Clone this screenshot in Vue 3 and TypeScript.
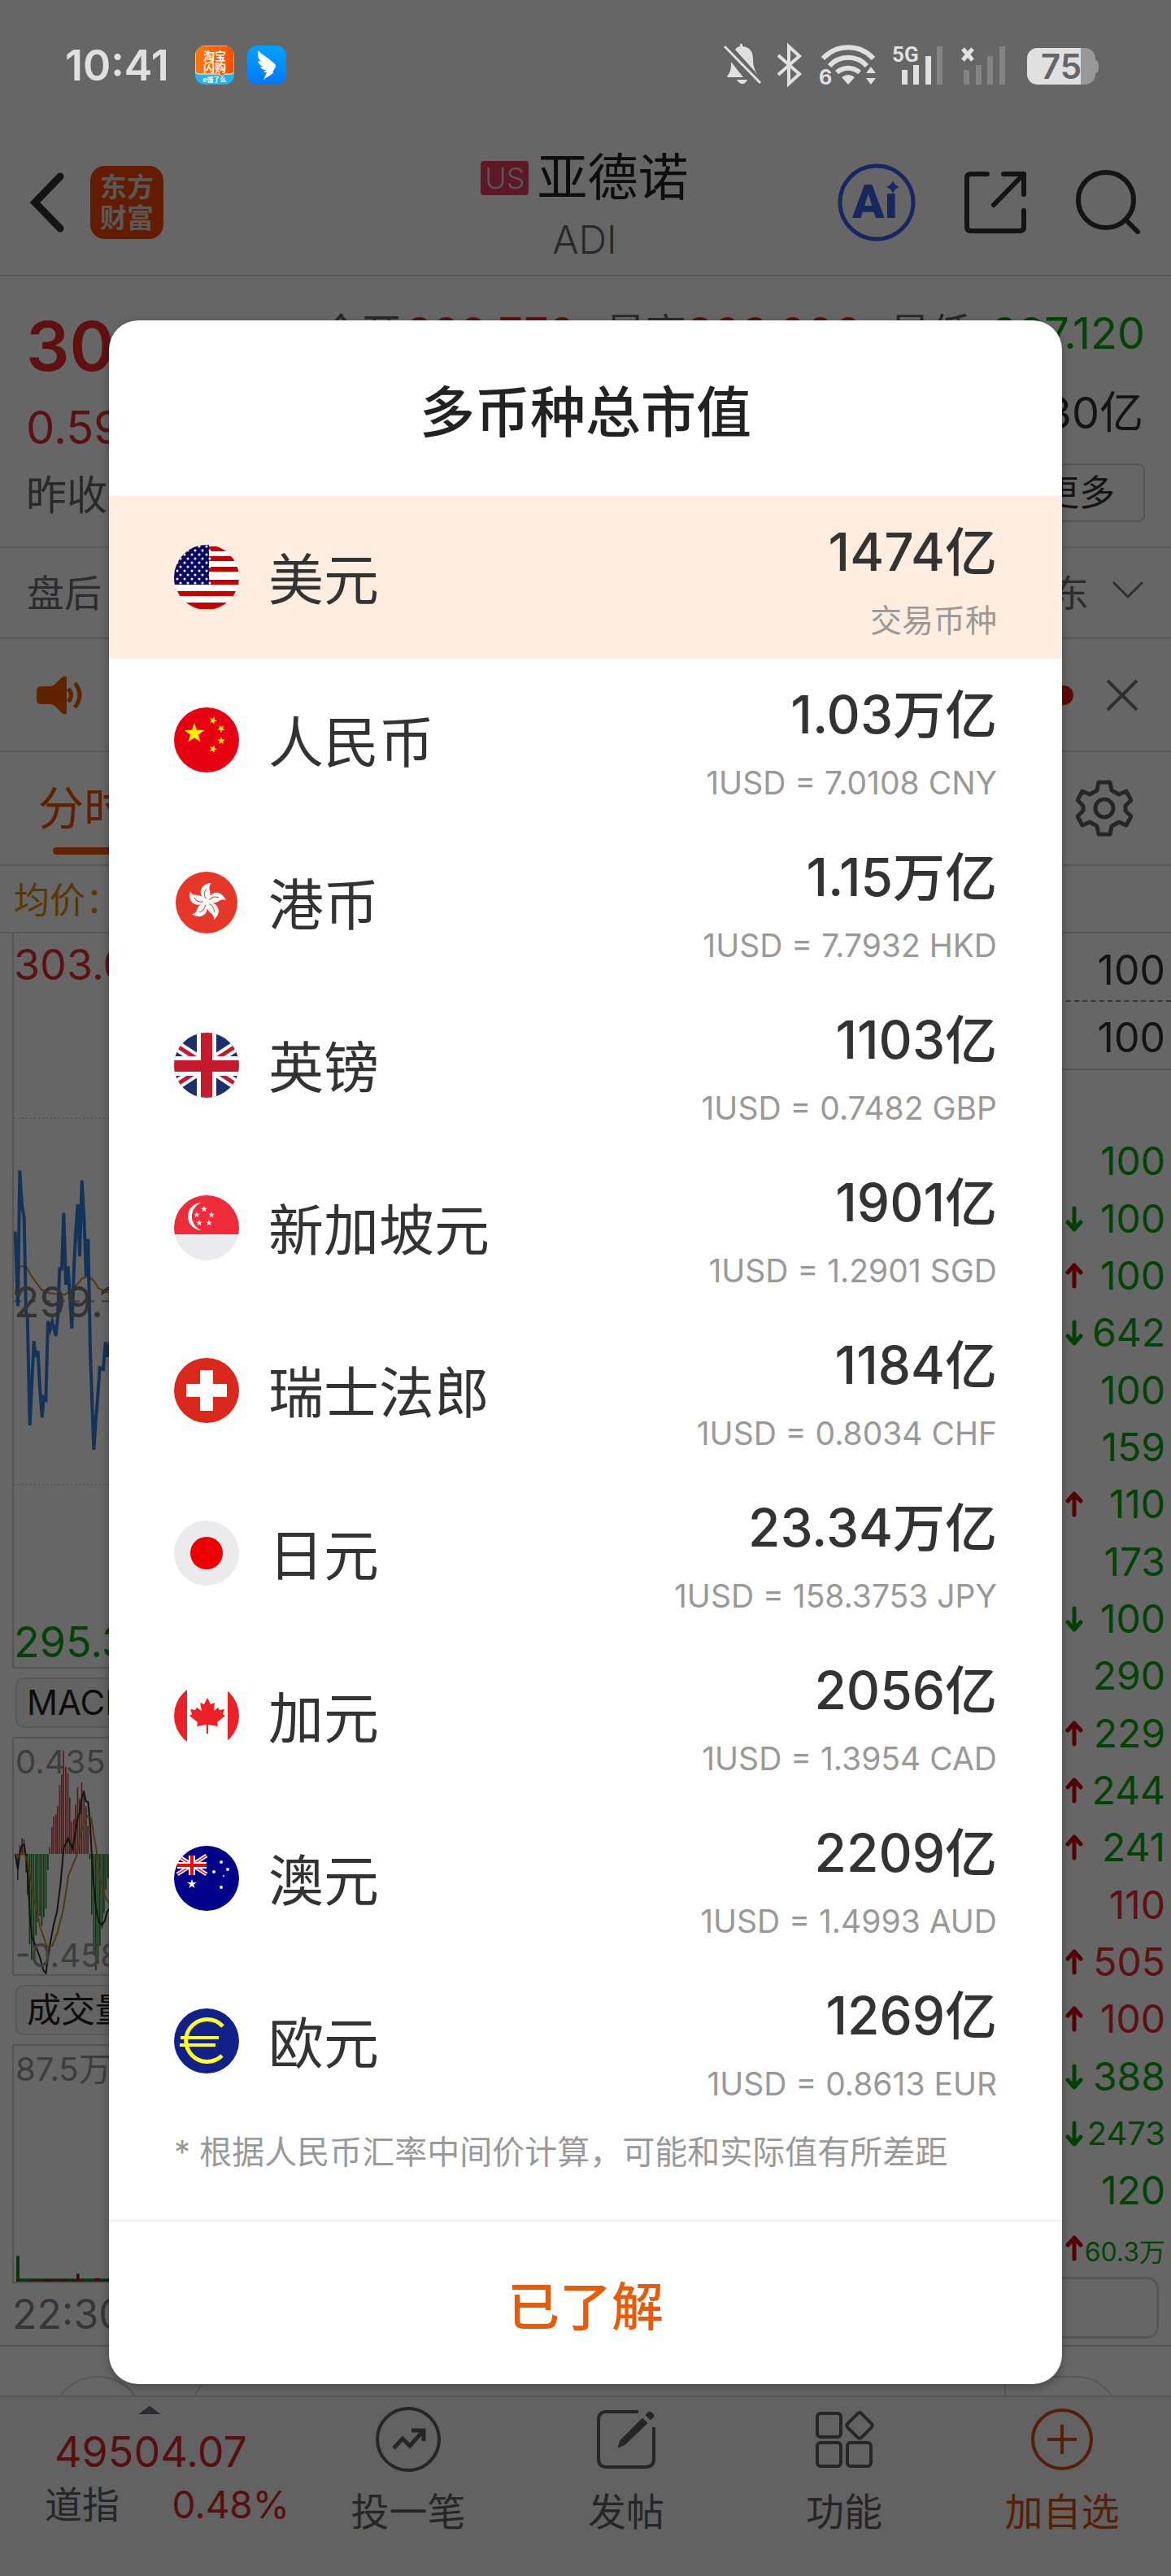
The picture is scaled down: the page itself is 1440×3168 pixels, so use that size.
<script setup lang="ts">
interface Currency { flag: string; name: string; amount: string; rate: string; active?: boolean }
interface Tick { size: string; tone: 'up' | 'down'; arrow?: 'up' | 'down'; scale?: 'mid' | 'small' }

const currencies: Currency[] = [
  { flag: 'us', name: '美元', amount: '1474亿', rate: '交易币种', active: true },
  { flag: 'cn', name: '人民币', amount: '1.03万亿', rate: '1USD = 7.0108 CNY' },
  { flag: 'hk', name: '港币', amount: '1.15万亿', rate: '1USD = 7.7932 HKD' },
  { flag: 'gb', name: '英镑', amount: '1103亿', rate: '1USD = 0.7482 GBP' },
  { flag: 'sg', name: '新加坡元', amount: '1901亿', rate: '1USD = 1.2901 SGD' },
  { flag: 'ch', name: '瑞士法郎', amount: '1184亿', rate: '1USD = 0.8034 CHF' },
  { flag: 'jp', name: '日元', amount: '23.34万亿', rate: '1USD = 158.3753 JPY' },
  { flag: 'ca', name: '加元', amount: '2056亿', rate: '1USD = 1.3954 CAD' },
  { flag: 'au', name: '澳元', amount: '2209亿', rate: '1USD = 1.4993 AUD' },
  { flag: 'eu', name: '欧元', amount: '1269亿', rate: '1USD = 0.8613 EUR' },
]

const ticks: Tick[] = [
  { size: '100', tone: 'down' },
  { size: '100', tone: 'down', arrow: 'down' },
  { size: '100', tone: 'down', arrow: 'up' },
  { size: '642', tone: 'down', arrow: 'down' },
  { size: '100', tone: 'down' },
  { size: '159', tone: 'down' },
  { size: '110', tone: 'down', arrow: 'up' },
  { size: '173', tone: 'down' },
  { size: '100', tone: 'down', arrow: 'down' },
  { size: '290', tone: 'down' },
  { size: '229', tone: 'down', arrow: 'up' },
  { size: '244', tone: 'down', arrow: 'up' },
  { size: '241', tone: 'down', arrow: 'up' },
  { size: '110', tone: 'up' },
  { size: '505', tone: 'up', arrow: 'up' },
  { size: '100', tone: 'up', arrow: 'up' },
  { size: '388', tone: 'down', arrow: 'down' },
  { size: '2473', tone: 'down', arrow: 'down', scale: 'mid' },
  { size: '120', tone: 'down' },
  { size: '60.3万', tone: 'down', arrow: 'up', scale: 'small' },
]

const priceLine = '53,628 63,778 70,505 78,575 86,600 93,795 98,795 107,1018 122,848 128,880 137,868 143,935 152,1002 158,962 166,966 174,808 182,825 190,810 203,838 210,800 217,703 225,703 232,590 240,735 248,698 262,823 270,700 276,632 284,573 291,678 299,525 307,600 315,718 322,643 330,870 343,1067 350,1010 357,965 365,902 378,905 386,850 393,880 402,850'
const averageLine = '53,755 70,698 92,697 110,715 130,730 150,745 180,752 235,755 270,742 300,722 325,718 345,728 360,742 402,752'
const difLine = '53,457 63,488 70,455 78,440 86,438 92,460 100,500 108,590 115,625 130,645 145,668 157,693 166,699 180,645 195,600 207,575 220,520 232,445 248,425 264,447 275,415 285,378 292,375 298,345 306,330 314,350 322,352 330,400 340,505 352,570 362,595 374,601 384,592 392,575 402,567'
const deaLine = '53,457 65,463 85,455 100,475 120,540 145,605 170,645 190,643 210,615 230,570 250,500 280,460 300,405 320,380 333,384 350,440 370,520 390,550 402,557'
const axis = 457
const macdBars: [number, number][] = [
  [63, 510], [71, 440], [79, 425], [86, 428], [94, 495], [99, 540], [107, 640], [114, 672], [122, 648], [130, 622],
  [137, 595], [145, 583], [152, 603], [159, 585], [167, 568], [174, 490], [181, 443], [189, 403], [196, 381],
  [204, 377], [210, 360], [218, 317], [225, 296], [232, 248], [240, 280], [248, 294], [255, 343], [262, 392],
  [270, 386], [276, 357], [284, 322], [291, 346], [299, 312], [307, 328], [315, 360], [322, 400], [329, 468],
  [336, 580], [344, 658], [351, 693], [359, 680], [366, 643], [374, 608], [381, 577], [388, 530], [396, 506],
]
const usStars = Array.from({ length: 50 }, (_, i) => ({ x: (i % 5) * 9 + 4 + (Math.floor(i / 5) % 2) * 4, y: Math.floor(i / 5) * 5 + 2 }))
const star = (cx: number, cy: number, r: number, turn = 0): string =>
  Array.from({ length: 10 }, (_, i) => {
    const a = ((i * 36 - 90 + turn) * Math.PI) / 180
    const d = i % 2 ? r * 0.4 : r
    return `${(cx + d * Math.cos(a)).toFixed(1)},${(cy + d * Math.sin(a)).toFixed(1)}`
  }).join(' ')
</script>

<template>
  <div class="screen">
    <div class="status">
      <time class="clock">10:41</time>
      <svg class="app-dot" viewBox="0 0 48 48" aria-hidden="true">
        <defs>
          <linearGradient id="g-orange"><stop offset="0" stop-color="#ff7a00" /><stop offset="1" stop-color="#ff4a00" /></linearGradient>
          <linearGradient id="g-blue" x2="0" y2="1"><stop offset="0" stop-color="#00a2ff" /><stop offset="1" stop-color="#0077ff" /></linearGradient>
          <clipPath id="app-clip"><rect width="48" height="48" rx="12" /></clipPath>
        </defs>
        <g clip-path="url(#app-clip)">
          <rect width="48" height="48" fill="#25b3ee" />
          <path d="M0 0h48v31q0 4-5 4H36l-3 3-3-3H5q-5 0-5-4z" fill="url(#g-orange)" stroke="#fff" />
        </g>
        <text x="24" y="18" text-anchor="middle" font-size="14" font-weight="700" fill="#fff">淘宝</text>
        <text x="24" y="32" text-anchor="middle" font-size="14" font-weight="700" fill="#fff">闪购</text>
        <text x="24" y="45" text-anchor="middle" font-size="8" font-weight="700" fill="#fff">e饿了么</text>
      </svg>
      <svg class="app-dot" viewBox="0 0 48 48" aria-hidden="true">
        <rect width="48" height="48" rx="12" fill="url(#g-blue)" />
        <path d="M14 6c3 5 11 8 17 14 4 3 5 5 3 8l-3 5h2l-4 3-9 6 4-9h-4l3-3c-4 0-6-2-7-4l4 0c-4-1-6-4-7-7l4 1c-4-4-5-9-3-14z" fill="#fff" />
      </svg>
      <svg class="indicators" viewBox="0 0 466 52" aria-hidden="true" fill="#e0e0e0">
        <path d="M6 40q5-6 5-13v-5L26 41H7zM16 7q3-4 6-4v-3h3v3q13 1 13 16 0 12 6 19zM18 44h13q-2 5-6 5t-7-5z" />
        <path d="M3 3l44 45" stroke="#e0e0e0" stroke-width="3" />
        <path d="M69 14l26 23-13 12V3l13 12-26 23" fill="none" stroke="#e0e0e0" stroke-width="4" />
        <g fill="none" stroke="#e0e0e0" stroke-width="6"><path d="M124 18a42 42 0 0 1 62 0" /><path d="M132 27a31 31 0 0 1 46 0" /><path d="M141 35a21 21 0 0 1 28 0" /></g>
        <path d="M147 41q8-6 16 0l-8 9zM177 36l6-8 6 8zM177 42h12l-6 8z" />
        <text x="119" y="50" font-size="25" font-weight="700">6</text>
        <text x="209" y="22" font-size="26" font-weight="700" font-family="Roboto">5G</text>
        <path d="M221 32h7v18h-7zM235 26h7v24h-7zM250 15h7v35h-7z" />
        <path d="M264 3h7v47h-7zM297 32h7v18h-7zM312 26h7v24h-7zM326 15h7v35h-7zM341 3h7v47h-7z" fill="#838383" />
        <path d="M296 6l12 14M308 6l-12 14" stroke="#e0e0e0" stroke-width="5" />
        <rect x="375" y="5" width="84" height="45" rx="13" fill="#999" /><path d="M459 20q4 0 4 8t-4 8z" fill="#999" />
        <path d="M388 5h53v45h-53a13 13 0 0 1-13-13V18a13 13 0 0 1 13-13z" />
        <text x="417" y="43" text-anchor="middle" font-size="42" font-weight="600" fill="#666">75</text>
      </svg>
    </div>

    <div class="page">
      <header class="topbar">
        <div class="top-left">
          <button class="icon-btn" aria-label="返回"><svg width="44" height="76" viewBox="0 0 44 76" fill="none" stroke="#333" stroke-width="9" stroke-linecap="round"><path d="M38 6L7 38l31 32" /></svg></button>
          <div class="brand"><span>东方</span><span>财富</span></div>
        </div>
        <div class="top-title">
          <h1><span class="market">US</span>亚德诺</h1>
          <p>ADI</p>
        </div>
        <div class="top-right">
          <button class="icon-btn" aria-label="Ai">
            <svg width="96" height="96" viewBox="0 0 96 96" fill="#3a62f0"><circle cx="48" cy="48" r="45" fill="none" stroke="#3a62f0" stroke-width="5" /><text x="46" y="67" text-anchor="middle" font-size="58" font-weight="900" font-family="Roboto">Aı</text><path d="M68 21q2 6 8 8-6 2-8 8-2-6-8-8 6-2 8-8z" /></svg>
          </button>
          <button class="icon-btn" aria-label="分享"><svg width="80" height="80" viewBox="0 0 80 80" fill="none" stroke="#333" stroke-width="6" stroke-linecap="round" stroke-linejoin="round"><path d="M30 5H10q-5 0-5 5v60q0 5 5 5h60q5 0 5-5V50M50 5h25v25M75 5L38 43" /></svg></button>
          <button class="icon-btn" aria-label="搜索"><svg width="80" height="80" viewBox="0 0 80 80" fill="none" stroke="#333" stroke-width="6" stroke-linecap="round"><circle cx="38" cy="37" r="34" /><path d="M62 61l15 15" /></svg></button>
        </div>
      </header>

      <section class="quote">
        <div class="quote-main"><strong>300</strong><span class="chg">0.59</span><span class="prev">昨收</span></div>
        <div class="quote-side">
          <dl><div><dt>今开</dt><dd class="up">299.770</dd></div><div><dt>最高</dt><dd class="up">303.000</dd></div><div><dt>最低</dt><dd class="down">297.120</dd></div></dl>
          <p>30亿</p>
          <button class="more">更多</button>
        </div>
      </section>

      <div class="bar session"><span>盘后</span><span class="bar-right">东<svg width="40" height="24" viewBox="0 0 40 24" fill="none" stroke="#777" stroke-width="3"><path d="M2 2l18 18L38 2" /></svg></span></div>

      <div class="bar notice">
        <svg width="60" height="50" viewBox="0 0 60 50" fill="#f25500"><path d="M6 14h10q5 0 9-5l6-6q6-4 6 2v40q0 6-6 2l-6-6q-4-5-9-5H6q-6 0-6-6v-10q0-6 6-6z" /><path d="M39 17q7 8 0 16M47 10q12 15 0 30" fill="none" stroke="#f25500" stroke-width="5" /></svg>
        <span class="bar-right"><i class="dot"></i><button class="icon-btn" aria-label="关闭"><svg width="40" height="40" viewBox="0 0 40 40" stroke="#777" stroke-width="4"><path d="M2 2l36 36M38 2L2 38" /></svg></button></span>
      </div>

      <nav class="bar tabs"><a href="#" class="tab">分时</a><button class="icon-btn" aria-label="设置"><svg width="70" height="70" viewBox="0 0 70 70" fill="none" stroke="#606060" stroke-width="5" stroke-linejoin="round"><path d="M28 3h14l2 10 9 5 9-4 6 11-7 7v6l7 7-6 11-9-4-9 5-2 10H28l-2-10-9-5-9 4-6-11 7-7v-6l-7-7 6-11 9 4 9-5z" /><circle cx="35" cy="35" r="11" /></svg></button></nav>

      <div class="bar average">均价：</div>

      <section class="board">
        <div class="charts">
          <div class="chart price">
            <svg viewBox="48 28 354 1476" preserveAspectRatio="none" fill="none">
              <path d="M48 400H402M48 1137H402" stroke="#bbb" stroke-dasharray="2 3" vector-effect="non-scaling-stroke" />
              <path d="M48 768H402" stroke="#999" stroke-width="2" stroke-dasharray="9 9" vector-effect="non-scaling-stroke" />
              <polyline :points="averageLine" stroke="#d08a20" stroke-width="2" vector-effect="non-scaling-stroke" />
              <polyline :points="priceLine" stroke="#3680dc" stroke-width="4" vector-effect="non-scaling-stroke" />
            </svg>
            <span class="up">303.0</span><span class="flat">299.1</span><span class="down">295.3</span>
          </div>
          <button class="indicator">MACD</button>
          <div class="chart sub">
            <svg viewBox="48 223 354 478" preserveAspectRatio="none" fill="none">
              <rect v-for="b in macdBars" :key="b[0]" :x="b[0] - 3" :y="Math.min(b[1], axis)" width="5" :height="Math.abs(b[1] - axis)" :fill="b[1] < axis ? '#c84848' : '#22892a'" />
              <polyline :points="difLine" stroke="#303030" stroke-width="2" vector-effect="non-scaling-stroke" />
              <polyline :points="deaLine" stroke="#d08a20" stroke-width="2" vector-effect="non-scaling-stroke" />
            </svg>
            <span>0.435</span><span>-0.458</span>
          </div>
          <button class="indicator">成交量</button>
          <div class="chart sub">
            <svg viewBox="48 838 354 478" preserveAspectRatio="none">
              <path d="M57 1264h12v52H57zM69 1310h333v6H69z" fill="#0c8c14" />
              <path d="M279 1300h11v16h-11zM57 1311h12v5H57zM110 1311h28v4h-28zM150 1311h50v4h-50zM205 1311h44v4h-44zM262 1311h45v4h-45zM345 1309h20v6h-20zM380 1311h22v4h-22z" fill="#a81f1f" />
            </svg>
            <span>87.5万</span>
          </div>
          <div class="time">22:30</div>
        </div>

        <aside class="tape">
          <div class="depth">100</div>
          <div class="depth">100</div>
          <ul>
            <li v-for="(t, i) in ticks" :key="i" :class="[t.tone, t.scale]">
              <svg v-if="t.arrow" :class="['arrow', t.arrow]" width="22" height="32" viewBox="0 0 22 32" fill="none" stroke-width="5" stroke-linecap="round" stroke-linejoin="round"><path v-if="t.arrow === 'up'" d="M11 29V4M3 12l8-9 8 9" /><path v-else d="M11 3v25M3 20l8 9 8-9" /></svg>
              <span>{{ t.size }}</span>
            </li>
          </ul>
          <div class="tape-box"></div>
        </aside>
      </section>

      <div class="peek" aria-hidden="true">
        <svg width="300" height="24" viewBox="0 0 300 24" fill="none" stroke="#d4d8de" stroke-width="2"><circle cx="120" cy="58" r="57" /><circle cx="310" cy="58" r="78" /></svg>
        <svg width="206" height="24" viewBox="0 0 206 24" fill="none" stroke="#d4d8de" stroke-width="2"><path d="M2 24V1h88q26 0 43 23" /></svg>
      </div>

      <footer class="dock">
        <a href="#" class="index">
          <svg width="28" height="10" viewBox="0 0 28 10" fill="#6c6c72"><path d="M0 10L14 0l14 10z" /></svg>
          <strong>49504.07</strong>
          <span class="index-row"><span>道指</span><em>0.48%</em></span>
        </a>
        <a href="#" class="dock-item"><svg viewBox="0 0 80 80"><circle cx="40" cy="40" r="38" /><path d="M22 51l11-12 9 9 16-18M44 29h15v13" stroke-width="5" /></svg>投一笔</a>
        <a href="#" class="dock-item"><svg viewBox="0 0 80 80"><path d="M55 6H16Q6 6 6 16v48q0 10 10 10h48q10 0 10-10V25" /><path d="M30 50l3-9 27-27 6 6-27 26zM64 10l4-4q6 1 6 6l-4 4z" fill="#606060" stroke-width="1" /></svg>发帖</a>
        <a href="#" class="dock-item"><svg viewBox="0 0 80 80"><rect x="7" y="8" width="29" height="29" rx="4" /><rect x="7" y="44" width="29" height="29" rx="4" /><rect x="44" y="44" width="29" height="29" rx="4" /><rect x="47" y="11" width="24" height="24" rx="3" transform="rotate(45 59 23)" /></svg>功能</a>
        <a href="#" class="dock-item accent"><svg viewBox="0 0 80 80"><circle cx="40" cy="40" r="36" /><path d="M40 22v36M22 40h36" /></svg>加自选</a>
      </footer>
    </div>

    <div class="mask">
      <div class="dialog" role="dialog" aria-modal="true" aria-labelledby="dlg-title">
        <h2 id="dlg-title">多币种总市值</h2>
        <ul class="list">
          <li v-for="c in currencies" :key="c.flag" :class="{ active: c.active }">
            <svg class="flag" viewBox="0 0 80 80" aria-hidden="true">
              <clipPath :id="'clip-' + c.flag"><circle cx="40" cy="40" :r="c.flag === 'hk' ? 38 : 40" /></clipPath>
              <g :clip-path="`url(#clip-${c.flag})`">
                <template v-if="c.flag === 'us'">
                  <path d="M0 0h80v80H0z" fill="#fff" />
                  <path d="M0 2h80v6H0zM0 14h80v6H0zM0 27h80v6H0zM0 43h80v6H0zM0 57h80v6H0zM0 71h80v8H0z" fill="#c90000" />
                  <path d="M0 0h43v49H0z" fill="#0a0a66" />
                  <circle v-for="(s, i) in usStars" :key="i" :cx="s.x" :cy="s.y" r="1.5" fill="#fff" />
                </template>
                <template v-else-if="c.flag === 'cn'">
                  <path d="M0 0h80v80H0z" fill="#e60012" />
                  <g fill="#ffee00"><polygon :points="star(25, 32, 13)" /><polygon :points="star(48, 16, 5, 20)" /><polygon :points="star(58, 26, 5, 40)" /><polygon :points="star(58, 41, 5)" /><polygon :points="star(48, 51, 5, 20)" /></g>
                </template>
                <template v-else-if="c.flag === 'hk'">
                  <path d="M0 0h80v80H0z" fill="#e63728" />
                  <g v-for="n in 5" :key="n" :transform="`rotate(${n * 72} 40 39)`"><path d="M40 39C36 36 30 29 34 22Q38 16 46 16 42 19 44 25 46 33 40 39z" fill="#fff" /><path d="M39 35q-4-6 1-12" fill="none" stroke="#e63728" stroke-width="1" /></g>
                </template>
                <template v-else-if="c.flag === 'gb'">
                  <path d="M0 0h80v80H0z" fill="#1d2e6b" />
                  <path d="M-6 10l92 60M86 10L-6 70" stroke="#fff" stroke-width="13" /><path d="M-6 10l92 60M86 10L-6 70" stroke="#c41a2e" stroke-width="5" />
                  <path d="M40 0v80M0 41h80" stroke="#fff" stroke-width="24" /><path d="M40 0v80M0 41h80" stroke="#c41a2e" stroke-width="14" />
                </template>
                <template v-else-if="c.flag === 'sg'">
                  <path d="M0 0h80v80H0z" fill="#ebebed" /><path d="M0 0h80v48H0z" fill="#ee2a3b" />
                  <path d="M34 9a17 17 0 1 0 0 34 18 18 0 0 1 0-34z" fill="#fff" />
                  <g fill="#fff"><polygon :points="star(37, 17, 4)" /><polygon :points="star(28, 24, 4)" /><polygon :points="star(46, 24, 4)" /><polygon :points="star(31, 34, 4)" /><polygon :points="star(43, 34, 4)" /></g>
                </template>
                <template v-else-if="c.flag === 'ch'">
                  <path d="M0 0h80v80H0z" fill="#da291c" /><path d="M32 15h16v17h17v16H48v17H32V48H15V32h17z" fill="#fff" />
                </template>
                <template v-else-if="c.flag === 'jp'">
                  <path d="M0 0h80v80H0z" fill="#ebebed" /><circle cx="40" cy="40" r="20" fill="#ee0000" />
                </template>
                <template v-else-if="c.flag === 'ca'">
                  <path d="M0 8h80v64H0z" fill="#fffefa" /><path d="M0 8h16v64H0zM66 8h14v64H66z" fill="#ec2027" />
                  <path d="M41 18l4 8 5-2-1 10 5-4 2 3 6-1-2 6 3 2-10 8 1 5-12-2v11h-2V51l-12 2 1-5-10-8 3-2-2-6 6 1 2-3 6 4-2-10 5 2z" fill="#ec2027" />
                </template>
                <template v-else-if="c.flag === 'au'">
                  <path d="M0 0h80v80H0z" fill="#00008b" />
                  <path d="M4 12l36 23M40 12L4 35" stroke="#fff" stroke-width="5" /><path d="M4 12l36 23M40 12L4 35" stroke="#f22" stroke-width="1.5" />
                  <path d="M22 12v24M4 24h36" stroke="#fff" stroke-width="8" /><path d="M22 12v24M4 24h36" stroke="#f00" stroke-width="4" />
                  <g fill="#fff"><polygon :points="star(22, 47, 6)" /><circle cx="58" cy="20" r="2" /><circle cx="66" cy="29" r="2" /><circle cx="49" cy="32" r="2" /><circle cx="61" cy="37" r="1" /><circle cx="58" cy="51" r="2" /></g>
                </template>
                <template v-else>
                  <path d="M0 0h80v80H0z" fill="#12218a" />
                  <path d="M60 22a26 26 0 1 0-1 36" fill="none" stroke="#ffff26" stroke-width="5" /><path d="M8 36h47M7 45h44" stroke="#ffff26" stroke-width="4" />
                </template>
              </g>
            </svg>
            <span class="name">{{ c.name }}</span>
            <span class="value"><b>{{ c.amount }}</b><small>{{ c.rate }}</small></span>
          </li>
        </ul>
        <p class="note">* 根据人民币汇率中间价计算，可能和实际值有所差距</p>
        <button class="confirm">已了解</button>
      </div>
    </div>
  </div>
</template>

<style>
body { margin: 0; background: #fff; }
</style>

<style scoped>
* { box-sizing: border-box; }
.screen { position: relative; min-height: 100vh; overflow: hidden; font-family: Inter, "Noto Sans CJK SC", sans-serif; color: #333; display: flex; flex-direction: column; }
h1, h2, p, ul, dl, dd { margin: 0; padding: 0; }
ul { list-style: none; }
a { color: inherit; text-decoration: none; }
button { font: inherit; color: inherit; border: 0; background: none; padding: 0; }
svg { display: block; flex: none; }
em { font-style: normal; }
.up { color: #e62e2e; }
.down { color: #0ca810; }

.status { position: relative; z-index: 3; height: 160px; padding: 0 86px 0 80px; display: flex; align-items: center; gap: 16px; }
.clock { width: 144px; font-size: 52px; font-weight: 600; color: #e0e0e0; }
.app-dot { width: 48px; height: 48px; }
.indicators { width: 466px; height: 52px; margin-left: auto; overflow: visible; }

.page { flex: 1; display: flex; flex-direction: column; }
.topbar { height: 180px; padding: 0 38px 0 36px; display: grid; grid-template-columns: 1fr auto 1fr; align-items: center; border-bottom: 2px solid #d6d6d6; }
.top-left, .top-right { display: flex; align-items: center; }
.top-left { gap: 31px; }
.top-right { justify-content: flex-end; gap: 58px; }
.brand { width: 90px; height: 90px; border-radius: 18px; background: #f84800; color: #ddd; display: flex; flex-direction: column; align-items: center; justify-content: center; font-size: 33px; line-height: 38px; font-weight: 700; }
.top-title { padding-top: 22px; text-align: center; color: #222; }
.top-title h1 { display: flex; align-items: center; justify-content: center; gap: 10px; font-size: 62px; line-height: 70px; font-weight: 400; }
.market { width: 59px; height: 42px; border-radius: 4px; background: #e83a5c; color: #ddd; font-size: 36px; line-height: 42px; font-weight: 300; }
.top-title p { font-size: 48px; line-height: 82px; font-weight: 300; color: #666; }

.quote { height: 334px; padding: 42px 32px 0 32px; display: flex; justify-content: space-between; border-bottom: 2px solid #dedede; }
.quote-main { width: 102px; display: flex; flex-direction: column; }
.quote-main strong { font-size: 84px; line-height: 88px; font-weight: 600; color: #ee2c2c; }
.chg { font-size: 56px; line-height: 112px; color: #e62e2e; }
.prev { font-size: 50px; line-height: 54px; color: #666; }
.quote-side { display: flex; flex-direction: column; align-items: flex-end; font-size: 54px; }
dl { display: flex; gap: 36px; line-height: 56px; }
dl div { width: 314px; display: flex; justify-content: space-between; white-space: nowrap; }
dt { font-size: 50px; color: #666; }
.quote-side p { line-height: 140px; color: #333; padding-right: 2px; }
.more { width: 200px; height: 72px; margin-top: -8px; border: 2px solid #d0d0d0; border-radius: 8px; font-size: 44px; line-height: 56px; padding-left: 38px; }

.bar { display: flex; align-items: center; justify-content: space-between; border-bottom: 2px solid #dadada; }
.bar-right { display: flex; align-items: center; gap: 28px; }
.session { height: 112px; padding: 0 33px 6px; font-size: 46px; color: #707070; }
.notice { height: 139px; padding: 0 40px 0 45px; }
.notice .bar-right { gap: 40px; }
.dot { width: 24px; height: 24px; border-radius: 50%; background: #e61c1c; }
.tabs { height: 140px; padding: 0 47px; }
.tab { height: 140px; display: flex; flex-direction: column; font-size: 56px; line-height: 140px; color: #ee5200; }
.tab::after { content: ""; flex: none; width: 76px; height: 9px; margin: -22px auto 0; border-radius: 5px; background: #f25500; }
.average { height: 83px; padding: 0 17px 4px; font-size: 44px; color: #de8c0c; }

.board { flex: 1; display: flex; justify-content: space-between; border-bottom: 2px solid #cfcfcf; }
.charts { width: 300px; padding-left: 15px; display: flex; flex-direction: column; }
.chart { position: relative; border: 2px solid #d0d0d0; border-width: 0 0 2px 2px; }
.chart svg { width: 118px; height: 100%; }
.chart span { position: absolute; left: 0; line-height: 54px; font-size: 52px; }
.chart span:nth-of-type(1) { top: 12px; }
.chart span:nth-of-type(2) { top: 427px; }
.chart span:nth-of-type(3) { bottom: 3px; }
.flat { color: #808080; }
.price { height: 904px; }
.sub { height: 294px; border-top-width: 2px; color: #999; }
.sub span:nth-of-type(n) { left: 2px; font-size: 40px; line-height: 42px; }
.sub span:nth-of-type(1) { top: 8px; }
.sub span:nth-of-type(2) { top: auto; bottom: 2px; }
.indicator { width: 240px; height: 62px; margin: 11px 0 11px 4px; border: 2px solid #dcdcdc; border-radius: 10px; background: #f8f8f8; color: #222; font-size: 42px; line-height: 58px; text-align: left; padding-left: 12px; white-space: nowrap; }
.time { font-size: 50px; line-height: 76px; color: #888; }

.tape { width: 150px; display: flex; flex-direction: column; font-size: 50px; text-align: right; }
.depth { height: 84px; line-height: 90px; padding-right: 7px; border-bottom: 2px dashed #888; color: #333; }
.depth + .depth { line-height: 88px; border-bottom: 2px solid #d0d0d0; }
.tape ul { flex: 1; margin-top: 77px; display: flex; flex-direction: column; }
.tape li { flex: 1; display: flex; align-items: center; padding: 0 7px 0 20px; font-size: 48px; line-height: 56px; white-space: nowrap; }
.tape li span { margin-left: auto; }
.tape li.mid { font-size: 40px; }
.tape li.small { font-size: 32px; }
.tape li.small span { padding-top: 10px; }
.arrow.up { stroke: #d00808; }
.arrow.down { stroke: #0ca010; }
.tape-box { height: 76px; margin: 0 15px 8px 0; border: 3px solid #d6d8db; border-left: 0; border-radius: 0 14px 14px 0; }

.peek { height: 60px; display: flex; justify-content: space-between; align-items: flex-end; }
.dock { height: 222px; display: flex; background: #f5f5f5; border-top: 2px solid #dadada; color: #606060; }
.index { width: 368px; padding: 11px 12px 0 55px; display: flex; flex-direction: column; font-size: 46px; }
.index svg { margin-left: 115px; }
.index strong { font-size: 52px; line-height: 52px; margin: 21px 0 10px 12px; font-weight: 400; color: #d92626; }
.index em { color: #d92626; }
.index-row { display: flex; justify-content: space-between; line-height: 56px; }
.dock-item { flex: 1; display: flex; flex-direction: column; align-items: center; padding-top: 12px; gap: 21px; font-size: 47px; line-height: 56px; }
.dock-item svg { width: 80px; height: 80px; fill: none; stroke: #606060; stroke-width: 4; }
.dock-item.accent { color: #d85010; }
.dock-item.accent svg { stroke: #d85010; }

.mask { position: absolute; inset: 0; z-index: 2; background: rgba(0, 0, 0, 0.6); display: flex; align-items: center; padding: 158px 134px 0; }
.dialog { flex: 1; border-radius: 36px; background: #fff; overflow: hidden; box-shadow: 0 4px 12px rgba(0, 0, 0, 0.3); }
.dialog h2 { height: 216px; line-height: 226px; text-align: center; font-size: 68px; font-weight: 500; color: #222; }
.list li { height: 200px; padding: 0 80px; display: flex; align-items: center; }
.list li.active { background: #ffede0; }
.flag { width: 80px; height: 80px; }
.name { margin-left: 36px; padding-top: 6px; font-size: 68px; line-height: 80px; }
.value { margin-left: auto; padding-top: 22px; display: flex; flex-direction: column; align-items: flex-end; }
.value b { font-size: 64px; line-height: 84px; font-weight: 500; }
.value small { font-size: 39px; line-height: 84px; font-weight: 400; color: #999; }
.note { height: 122px; padding: 0 80px; font-size: 40px; line-height: 74px; color: #999; border-bottom: 2px solid #efefef; }
.confirm { display: block; width: 100%; height: 200px; font-size: 64px; font-weight: 500; color: #e45c0c; }
</style>
